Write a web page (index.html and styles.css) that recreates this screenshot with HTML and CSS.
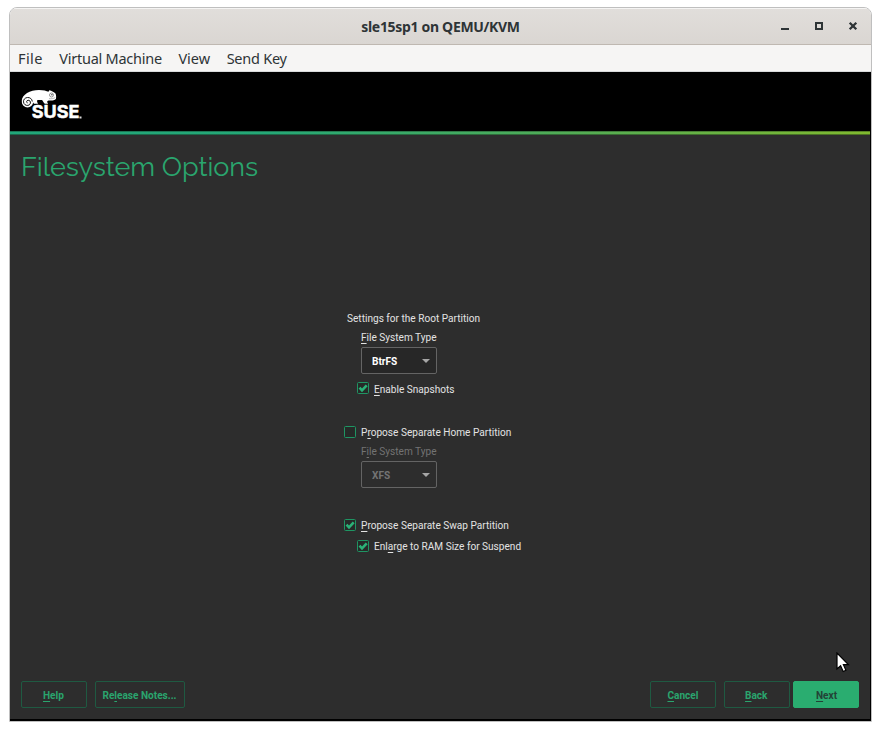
FILE: index.html
```html
<!DOCTYPE html>
<html lang="en">
<head>
<meta charset="utf-8">
<title>sle15sp1 on QEMU/KVM</title>
<link rel="stylesheet" href="styles.css">
</head>
<body>
<div class="window">
  <header class="titlebar">
    <h1 class="window-title">sle15sp1 on QEMU/KVM</h1>
    <div class="controls">
      <svg width="10" height="10" viewBox="0 0 10 10"><path d="M1 7h8v2H1z" fill="#2e3436"/></svg>
      <svg width="10" height="10" viewBox="0 0 10 10"><path d="M2 2h6v6H2z" fill="none" stroke="#2e3436" stroke-width="2"/></svg>
      <svg width="10" height="10" viewBox="0 0 10 10"><path d="M1.7 1.7l6.600 6.600M8.300 1.700L1.700 8.300" fill="none" stroke="#2e3436" stroke-width="2.300"/></svg>
    </div>
  </header>
  <nav class="menubar">
    <span class="m-file">File</span><span class="m-vm">Virtual Machine</span><span class="m-view">View</span><span class="m-key">Send Key</span>
  </nav>
  <div class="screen">
    <div class="banner">
      <svg class="logo" width="90" height="58" viewBox="0 0 90 58">
        <path d="M11.700 21C12 14.500 20 9.900 29 9.900c4.500 0 7.500.8 9.500 1.900l.8-1.600c2.500.3 4 1.800 6 3 1 1.700 1 3.800.6 5.700-1.700 1.700-4.700 1.700-7.400 1.700-1.600.4-1.800 1.700-.3 3.200h-3.400c-1.500-1.300-1.700-2.500-2.700-3.700h-4.600c-.8 1-.4 2 .5 3.700h-4c-1.200-1.300-1.400-2.500-1.300-3.500-2.600-3.500-8-3.700-11 .7z" fill="#fff"/>
        <circle cx="17.500" cy="21.800" r="5.700" fill="#fff"/>
        <path d="M22.300 21.500c-.3-2.600-2.300-4.100-4.700-4-2.700.1-4.300 2.200-4.100 4.400.2 2.300 2.200 3.800 4.400 3.500 1.900-.3 2.800-1.900 2.500-3.400-.3-1.600-2.100-2.300-3.300-1.300-.9.900-.5 2 .4 2.200" fill="none" stroke="#000" stroke-width=".9"/>
        <circle cx="41.500" cy="15" r="2" fill="#fff" stroke="#777" stroke-width=".8"/>
        <circle cx="41.900" cy="14.800" r=".7" fill="#333"/>
        <path d="M39 18.600c2.500.5 4.500-.1 6.200-1" fill="none" stroke="#888" stroke-width=".6"/>
        <text class="wordmark" x="21.800" y="38.200" textLength="47.600" lengthAdjust="spacingAndGlyphs">SUSE</text>
        <rect x="69.500" y="36.500" width="2" height="2" fill="#ddd"/>
      </svg>
    </div>
    <div class="rule"></div>
    <main class="installer">
      <h2 class="heading">Filesystem Options</h2>
      <section class="form">
        <div class="group-label"><span>Settings for the Root Partition</span></div>
        <div class="field-label"><span><u>F</u>ile System Type</span></div>
        <div class="select active"><span>BtrFS</span><i class="arrow"></i></div>
        <div class="check sub snapshots"><svg class="box" viewBox="0 0 12 12"><rect x=".5" y=".5" width="11" height="11" rx="1"/><path d="M2.500 5.700l2.500 2.600 4.700-5"/></svg><span><u>E</u>nable Snapshots</span></div>
        <div class="check home"><svg class="box" viewBox="0 0 12 12"><rect x=".5" y=".5" width="11" height="11" rx="1"/></svg><span>P<u>r</u>opose Separate Home Partition</span></div>
        <div class="field-label disabled"><span>F<u>i</u>le System Type</span></div>
        <div class="select disabled"><span>XFS</span><i class="arrow"></i></div>
        <div class="check swap"><svg class="box" viewBox="0 0 12 12"><rect x=".5" y=".5" width="11" height="11" rx="1"/><path d="M2.500 5.700l2.500 2.600 4.700-5"/></svg><span><u>P</u>ropose Separate Swap Partition</span></div>
        <div class="check sub enlarge"><svg class="box" viewBox="0 0 12 12"><rect x=".5" y=".5" width="11" height="11" rx="1"/><path d="M2.500 5.700l2.500 2.600 4.700-5"/></svg><span>Enl<u>a</u>rge to RAM Size for Suspend</span></div>
      </section>
      <footer class="actions">
        <div class="btn"><span><u>H</u>elp</span></div>
        <div class="btn notes"><span>Re<u>l</u>ease Notes...</span></div>
        <div class="btn cancel"><span><u>C</u>ancel</span></div>
        <div class="btn back"><span><u>B</u>ack</span></div>
        <div class="btn next"><span><u>N</u>ext</span></div>
      </footer>
    </main>
  </div>
</div>
<svg class="cursor" width="14" height="22" viewBox="0 0 14 22"><path d="M1 1v16l3.600-3.300 2.600 5.800 2.700-1.200-2.500-5.600h5z" fill="#fff" stroke="#000" stroke-width="1.200"/></svg>
</body>
</html>
```
FILE: styles.css
```css
* { box-sizing: border-box; }
body { margin: 0; padding: 7px 9px; background: #fff; height: 731px; overflow: hidden; }
h1, h2 { margin: 0; }

.window {
  width: 863px; height: 715px;
  border: 1px solid #bfbfbf;
  border-radius: 8px 8px 0 0;
  overflow: hidden;
  display: flex; flex-direction: column;
}
.titlebar {
  height: 37px; flex: none;
  display: grid; grid-template-columns: 1fr auto 1fr; align-items: center;
  background: linear-gradient(#e1dedb, #dad6d2);
  border-bottom: 1px solid #bfb8b1;
  box-shadow: inset 0 1px #f5f4f3;
}
.window-title {
  grid-column: 2;
  font: bold 14px/20px "Noto Sans", sans-serif; letter-spacing: -.31px;
  color: #2e3436; white-space: nowrap; padding-top: 2px;
}
.controls { display: flex; gap: 24px; justify-self: end; padding-right: 13px; }
.controls svg { display: block; }
.menubar {
  height: 27px; flex: none; display: flex; gap: 16.500px; padding-left: 8px;
  background: #f6f5f4; border-bottom: 1px solid #d8dadb;
  font: 14.500px/27px "Noto Sans", sans-serif; color: #2e3436; white-space: nowrap;
}
.m-file { letter-spacing: .4px; }
.m-vm { letter-spacing: -.25px; }
.m-key { letter-spacing: -.25px; }

.screen { flex: 1; display: flex; flex-direction: column; background: #000; padding: 0 1px 2px 0; }
.banner { height: 59px; flex: none; padding-top: 8px; }
.logo { display: block; height: 58px; width: 90px; margin-bottom: -7px; overflow: hidden; }
.wordmark { font: 700 17.500px "Inter", sans-serif; fill: #fff; stroke: #fff; stroke-width: .5; }
.rule {
  height: 4px; flex: none;
  background: linear-gradient(90deg, #21a67a 0%, #25a877 30%, #52ac55 65%, #80b92f 100%);
  box-shadow: inset 0 1px rgba(20,30,20,.35), inset 0 -1px rgba(20,30,20,.45);
}
.installer { flex: 1; display: flex; flex-direction: column; background: #2d2d2d; color: #e3e3e3; }
.heading {
  padding: 14px 0 0 11px; height: 175px; flex: none;
  font: 400 27px/36px "Raleway", "Lato", sans-serif; color: #2aa56e; letter-spacing: -.05px;
}

.form { width: 200px; margin-left: 334px; font: 11px/14px "Roboto", sans-serif; white-space: nowrap; }
.form span { display: inline-block; transform: scaleX(.917); transform-origin: left; }
u { text-decoration: underline; text-decoration-thickness: 1px; text-underline-offset: 2px; text-decoration-skip-ink: none; }
.group-label { height: 20px; padding: 2px 0 0 3px; }
.field-label { height: 17px; padding: 1px 0 0 17px; }
.disabled { color: #737373; }
.select {
  width: 76px; height: 27px; margin-left: 17px; padding: 1px 6px 0 10px;
  display: flex; align-items: center; justify-content: space-between;
  border: 1px solid #646464; border-radius: 2px; font-weight: bold;
}
.select span { padding-top: 1px; }
.select.active { background: #272727; color: #fff; }
.arrow { border: 4px solid transparent; border-top-color: #a6a6a6; border-bottom: 0; }
.check { display: flex; align-items: flex-start; gap: 5px; height: 14px; }
.sub { padding-left: 13.400px; }
.snapshots span { padding-top: 1px; }
.box { width: 12px; height: 12px; flex: none; display: block; }
.box rect { fill: #262a28; stroke: #1f9563; }
.box path { fill: none; stroke: #2bb177; stroke-width: 2.600; }
.snapshots { margin-top: 8px; }
.home { margin: 30px 0 4px; }
.swap { margin-top: 31px; }
.enlarge { margin-top: 7px; }

.actions { margin-top: auto; display: flex; padding: 0 11px 11px; font: bold 11px/27px "Roboto", sans-serif; color: #2aa56e; }
.btn { width: 66px; height: 27px; border: 1px solid #1f5a42; border-radius: 2px; text-align: center; white-space: nowrap; }
.btn span { display: inline-block; transform: scaleX(.915); margin-left: -1px; }
.btn.notes span { margin: 0 -4px 0 -5px; }
.notes { width: 90px; margin-left: 8px; }
.cancel { margin-left: auto; }
.back { margin-left: 8px; }
.next { margin-left: 3px; background: #2aad70; border-color: #2aad70; color: #234236; }
.btn.next span { margin-left: 1px; }

.cursor { position: absolute; left: 836px; top: 652px; }
```
